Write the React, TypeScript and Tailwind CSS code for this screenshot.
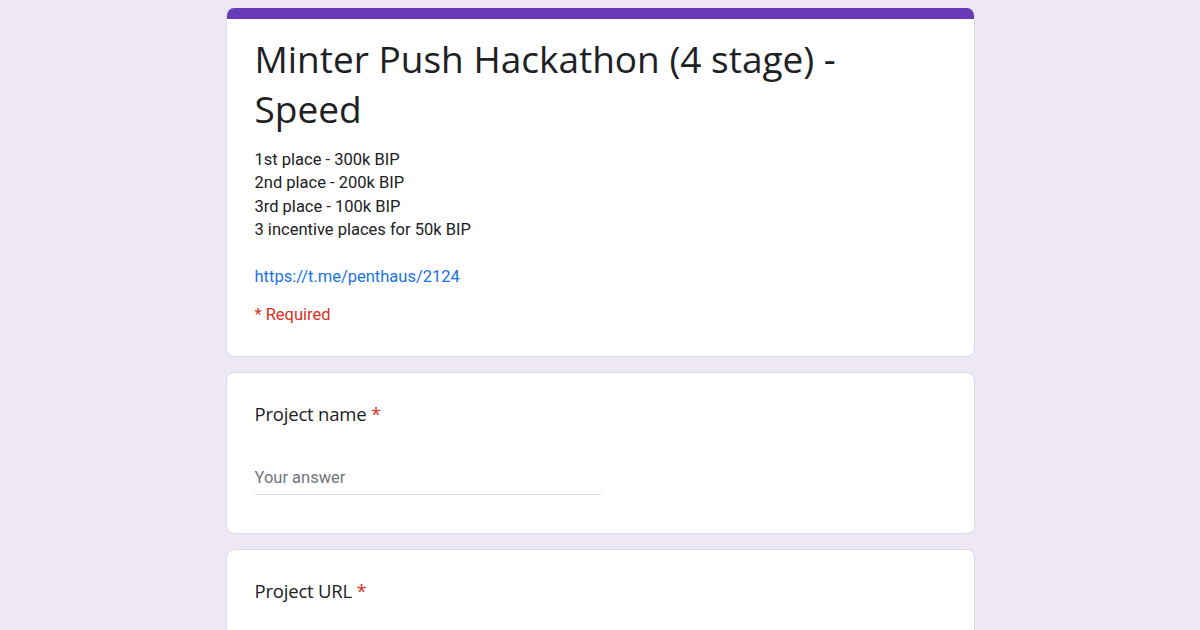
import React from 'react';

const sans = "font-['Roboto','Liberation_Sans',sans-serif]";

function QuestionCard({ label, children }: { label: string; children?: React.ReactNode }) {
  return (
    <div className="rounded-lg border border-[#dadce0] bg-white px-[28px] pt-[27px] pb-[38px]">
      <div className="font-['Open_Sans','Roboto',sans-serif] text-[18.5px] leading-[28px] tracking-[-0.2px] text-[#202124]">
        {label} <span className="text-[#d93025]">*</span>
      </div>
      {children}
    </div>
  );
}

function AnswerField() {
  return (
    <div className="mt-[38px] w-[346px] border-b border-[#dadce0] pb-[5px] text-[16.5px] leading-[23px] text-[#70757a]">
      Your answer
    </div>
  );
}

export default function App() {
  return (
    <div className={`h-[630px] w-[1200px] overflow-hidden bg-[#ede7f6] ${sans}`}>
      <div className="mx-auto flex w-[749px] flex-col gap-[15px] pt-2">
        <div className="overflow-hidden rounded-lg border border-t-0 border-[#dadce0] bg-white">
          <div className="h-[11px] bg-[#673ab7]" />
          <div className="px-[28px] pt-[15px] pb-[30px]">
            <h1 className="max-w-[610px] font-['Open_Sans','Roboto',sans-serif] text-[37px] leading-[50px] text-[#202124]">
              Minter Push Hackathon (4 stage) - Speed
            </h1>
            <div className="mt-[14px] text-[16.5px] leading-[23.4px] text-[#202124]">
              <p>1st place - 300k BIP</p>
              <p>2nd place - 200k BIP</p>
              <p>3rd place - 100k BIP</p>
              <p>3 incentive places for 50k BIP</p>
              <p className="mt-[23.4px] text-[#1a73e8]">https://t.me/penthaus/2124</p>
            </div>
            <div className="mt-[14.5px] text-[16.5px] leading-[23.4px] text-[#d93025]">* Required</div>
          </div>
        </div>

        <QuestionCard label="Project name">
          <AnswerField />
        </QuestionCard>

        <QuestionCard label="Project URL" />
      </div>
    </div>
  );
}
